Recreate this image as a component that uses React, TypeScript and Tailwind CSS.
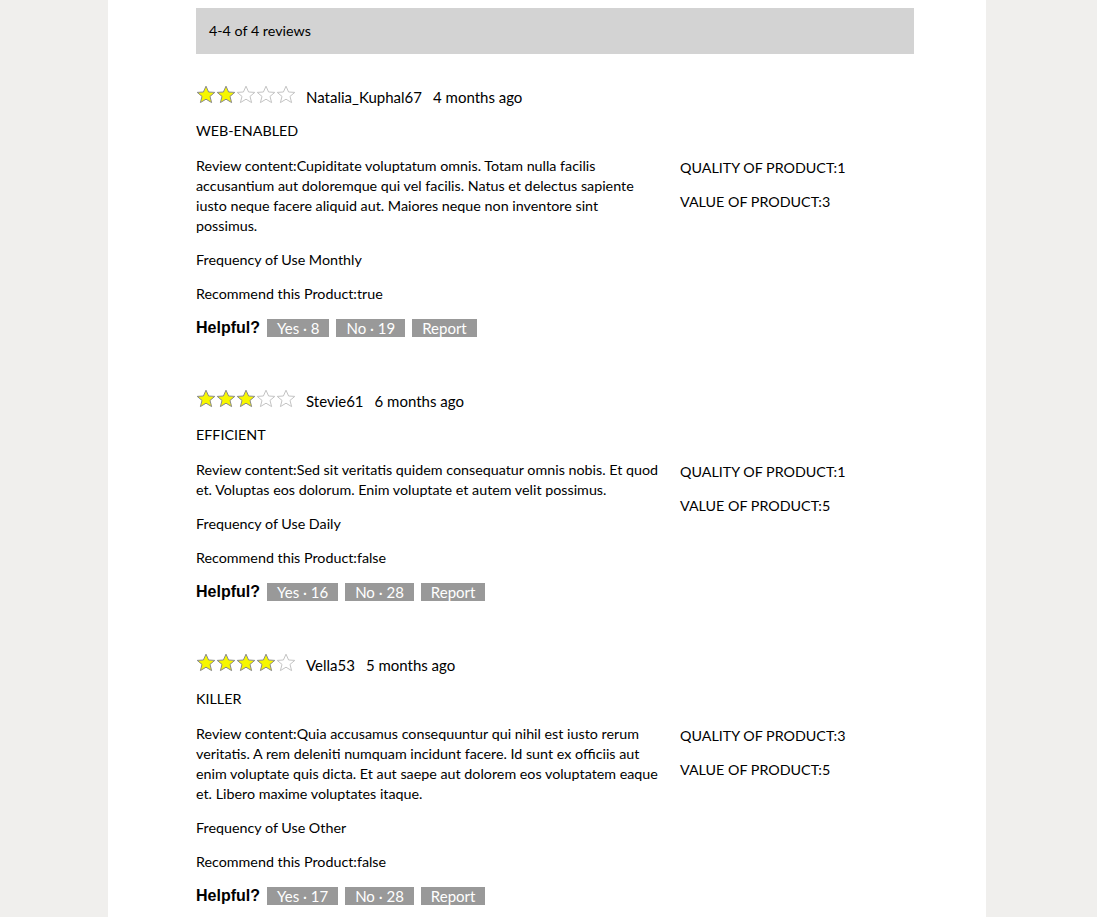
import React from "react";

type Review = {
  rating: number;
  user: string;
  when: string;
  title: string;
  body: string;
  frequency: string;
  recommend: boolean;
  quality: number;
  value: number;
  yes: number;
  no: number;
};

const reviews: Review[] = [
  {
    rating: 2,
    user: "Natalia_Kuphal67",
    when: "4 months ago",
    title: "WEB-ENABLED",
    body: "Cupiditate voluptatum omnis. Totam nulla facilis accusantium aut doloremque qui vel facilis. Natus et delectus sapiente iusto neque facere aliquid aut. Maiores neque non inventore sint possimus.",
    frequency: "Monthly",
    recommend: true,
    quality: 1,
    value: 3,
    yes: 8,
    no: 19,
  },
  {
    rating: 3,
    user: "Stevie61",
    when: "6 months ago",
    title: "EFFICIENT",
    body: "Sed sit veritatis quidem consequatur omnis nobis. Et quod et. Voluptas eos dolorum. Enim voluptate et autem velit possimus.",
    frequency: "Daily",
    recommend: false,
    quality: 1,
    value: 5,
    yes: 16,
    no: 28,
  },
  {
    rating: 4,
    user: "Vella53",
    when: "5 months ago",
    title: "KILLER",
    body: "Quia accusamus consequuntur qui nihil est iusto rerum veritatis. A rem deleniti numquam incidunt facere. Id sunt ex officiis aut enim voluptate quis dicta. Et aut saepe aut dolorem eos voluptatem eaque et. Libero maxime voluptates itaque.",
    frequency: "Other",
    recommend: false,
    quality: 3,
    value: 5,
    yes: 17,
    no: 28,
  },
];

function Star({ filled }: { filled: boolean }) {
  return (
    <svg width="20" height="20" viewBox="0 0 20 20">
      <polygon
        points="10,1.2 12.6,7 18.8,7.4 14,11.4 15.6,17.6 10,14.2 4.4,17.6 6,11.4 1.2,7.4 7.4,7"
        fill={filled ? "#f7f700" : "#ffffff"}
        stroke={filled ? "#8a8a8a" : "#c4c4c4"}
        strokeWidth="1"
      />
    </svg>
  );
}

function Stars({ rating }: { rating: number }) {
  return (
    <div className="flex h-5">
      {[1, 2, 3, 4, 5].map((n) => (
        <Star key={n} filled={n <= rating} />
      ))}
    </div>
  );
}

function ReviewItem({ r }: { r: Review }) {
  const btn = "bg-[#999999] text-white h-[18px] px-[10px] leading-[18px] text-[15px]";
  return (
    <div className="mb-[51px]">
      <div className="flex items-start gap-[10px]">
        <Stars rating={r.rating} />
        <div className="pt-[2px] leading-5 flex gap-[11px] text-[15px]">
          <span>{r.user}</span>
          <span>{r.when}</span>
        </div>
      </div>
      <div className="mt-[14px] leading-5">{r.title}</div>
      <div className="mt-[15px] grid grid-cols-[464px_1fr] gap-5">
        <div className="flex flex-col gap-[14px] leading-5">
          <p>{`Review content:${r.body}`}</p>
          <p>{`Frequency of Use ${r.frequency}`}</p>
          <p>{`Recommend this Product:${r.recommend}`}</p>
          <div className="flex items-center gap-[7px] h-5">
            <span className="font-bold text-[16px] leading-5 font-['Liberation_Sans',sans-serif]">
              Helpful?
            </span>
            <button className={btn}>{`Yes · ${r.yes}`}</button>
            <button className={btn}>{`No · ${r.no}`}</button>
            <button className={btn}>Report</button>
          </div>
        </div>
        <div className="pt-[2px] flex flex-col gap-[14px] leading-5">
          <p>{`QUALITY OF PRODUCT:${r.quality}`}</p>
          <p>{`VALUE OF PRODUCT:${r.value}`}</p>
        </div>
      </div>
    </div>
  );
}

export default function App() {
  return (
    <div className="min-h-[917px] bg-[#f0efed] text-black text-[14.3px] font-['Lato','Liberation_Sans',sans-serif]">
      <div className="ml-[108px] w-[878px] min-h-[917px] bg-white pl-[88px] pr-[72px] pt-2">
        <div className="h-[46px] bg-[#d3d3d3] px-[13px] flex items-center">
          4-4 of 4 reviews
        </div>
        <div className="pt-[31px]">
          {reviews.map((r) => (
            <ReviewItem key={r.user} r={r} />
          ))}
        </div>
      </div>
    </div>
  );
}
